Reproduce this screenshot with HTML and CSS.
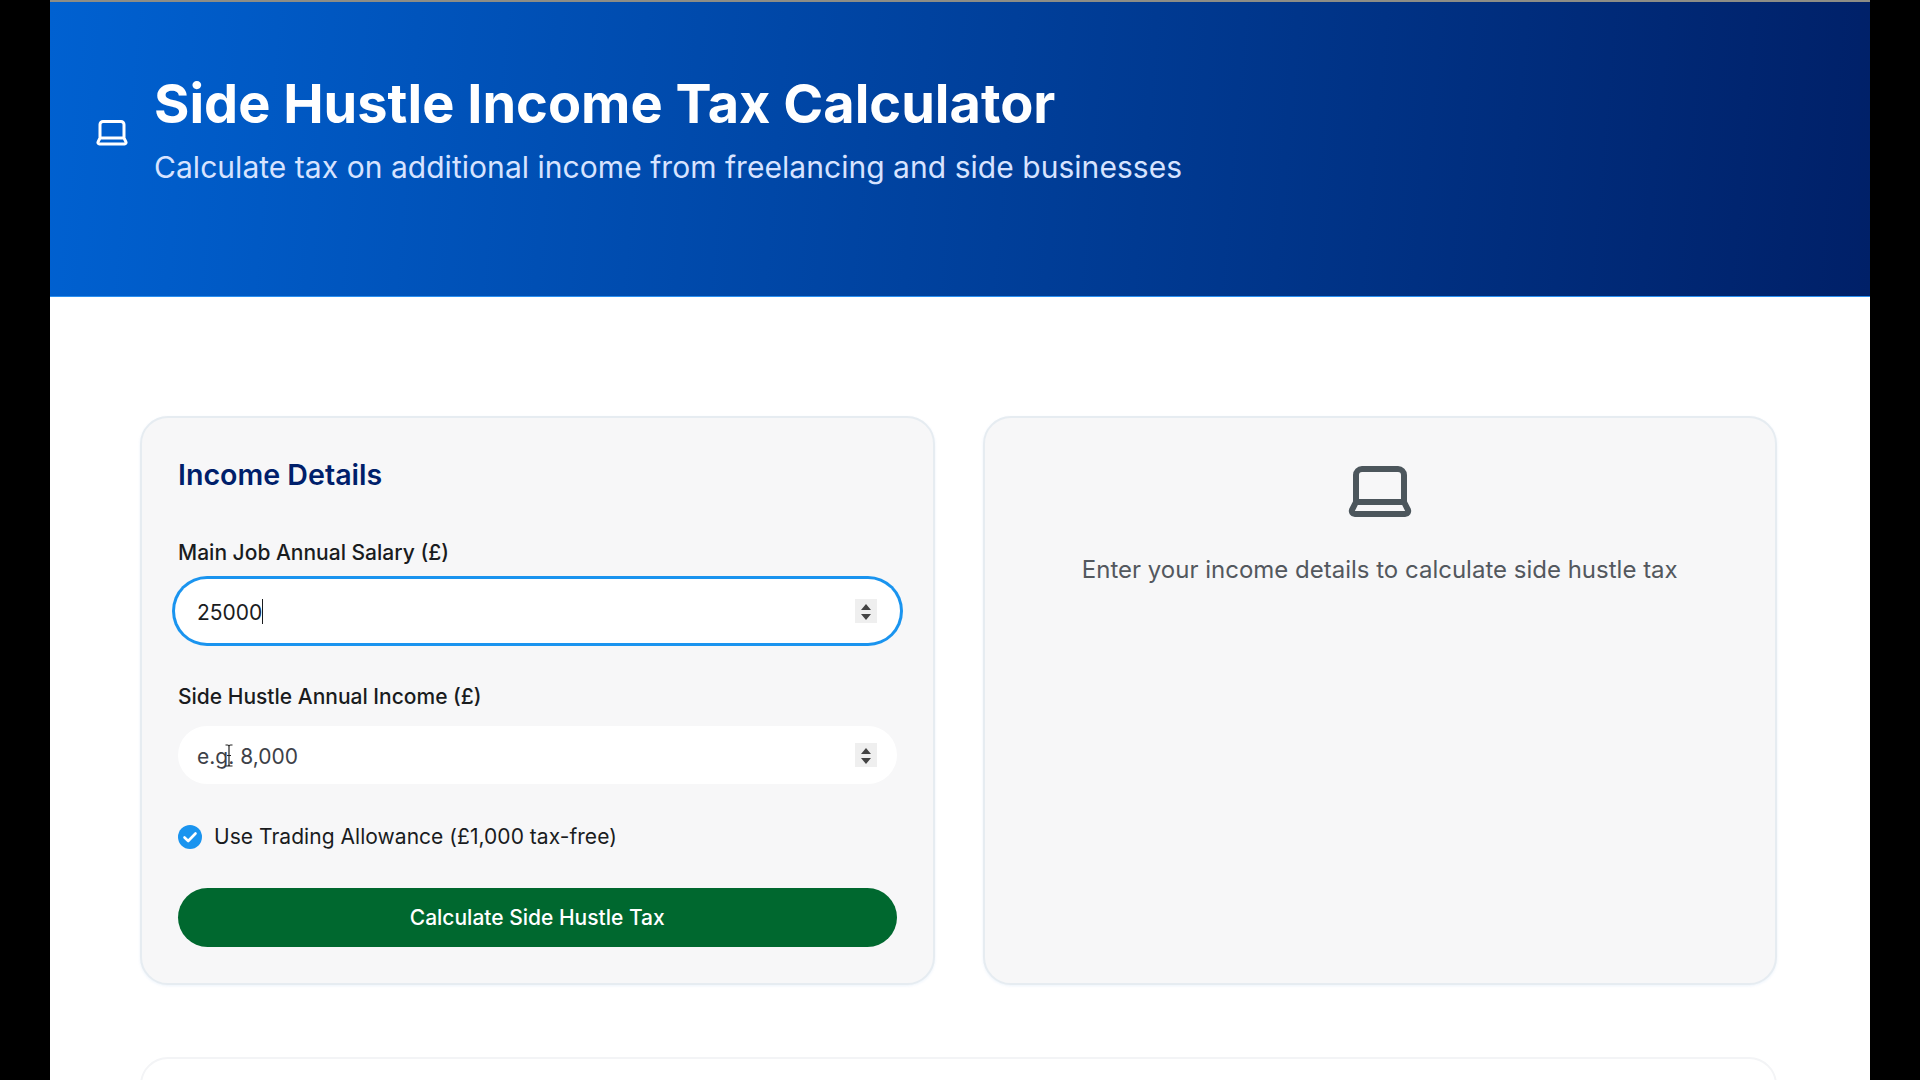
FILE: index.html
```html
<!DOCTYPE html>
<html lang="en">
<head>
<meta charset="utf-8">
<title>Side Hustle Income Tax Calculator</title>
<link rel="stylesheet" href="styles.css">
</head>
<body>
<div class="page">
  <header class="hero">
    <svg class="hero-icon" viewBox="0 0 24 24" fill="none" stroke="currentColor" stroke-width="2" stroke-linecap="round" stroke-linejoin="round"><path d="M20 16V7a2 2 0 0 0-2-2H6a2 2 0 0 0-2 2v9m16 0H4m16 0 1.28 2.55a1 1 0 0 1-.9 1.45H3.62a1 1 0 0 1-.9-1.45L4 16"/></svg>
    <div class="hero-text">
      <h1>Side Hustle Income Tax Calculator</h1>
      <p>Calculate tax on additional income from freelancing and side businesses</p>
    </div>
  </header>
  <main class="content">
    <div class="columns">
      <section class="card form-card">
        <h2>Income Details</h2>
        <div class="field">
          <label for="salary">Main Job Annual Salary (£)</label>
          <div class="input-wrap">
            <input id="salary" class="input focused" type="number" value="25000">
            <span class="caret"></span>
            <span class="spin"><svg viewBox="0 0 22 24"><path d="M11 5l5 6H6zM11 21l5-6H6z"/></svg></span>
          </div>
        </div>
        <div class="field">
          <label for="side">Side Hustle Annual Income (£)</label>
          <div class="input-wrap">
            <input id="side" class="input" type="number" placeholder="e.g. 8,000">
            <span class="spin"><svg viewBox="0 0 22 24"><path d="M11 5l5 6H6zM11 21l5-6H6z"/></svg></span>
            <svg class="ibeam" viewBox="0 0 10 23" fill="none" stroke="#222" stroke-width="1.2"><path d="M1.500 1h2Q5 1 5 2.500v18Q5 22 3.500 22h-2M8.500 1h-2Q5 1 5 2.500M5 20.500Q5 22 6.500 22h2M3 11.500h4"/></svg>
          </div>
        </div>
        <div class="check-row">
          <span class="check"><svg viewBox="0 0 24 24" fill="none" stroke="#fff" stroke-width="2.600" stroke-linecap="round" stroke-linejoin="round"><path d="M6.500 12.500l3.700 3.500 7.300-7.500"/></svg></span>
          <span>Use Trading Allowance (£1,000 tax-free)</span>
        </div>
        <button class="submit" type="button">Calculate Side Hustle Tax</button>
      </section>
      <section class="card empty-card">
        <svg class="empty-icon" viewBox="0 0 24 24" fill="none" stroke="currentColor" stroke-width="2" stroke-linecap="round" stroke-linejoin="round"><path d="M20 16V7a2 2 0 0 0-2-2H6a2 2 0 0 0-2 2v9m16 0H4m16 0 1.28 2.55a1 1 0 0 1-.9 1.45H3.620a1 1 0 0 1-.9-1.45L4 16"/></svg>
        <p>Enter your income details to calculate side hustle tax</p>
      </section>
    </div>
    <section class="card next-card"></section>
  </main>
</div>
</body>
</html>
```
FILE: styles.css
```css
* { box-sizing: border-box; }
html, body { margin: 0; height: 100%; overflow: hidden; background: #000; }
body { font-family: Inter, "Liberation Sans", sans-serif; color: #1a1c1e; }
.page { width: 1820px; height: 1080px; margin: 0 auto; background: #fff; overflow: hidden; border-top: 2px solid #8d8d86; }
.hero {
  height: 295px;
  padding: 71px 44px 0;
  display: flex;
  align-items: flex-start;
  gap: 24px;
  color: #fff;
  background: linear-gradient(95deg, #0061d1 0%, #002068 100%);
  border-bottom: 1px solid #2a8ff0;
}
.hero-icon { width: 36px; height: 36px; margin-top: 41px; flex: none; }
.hero h1 { margin: 0; font-size: 54.100px; line-height: 62px; font-weight: 700; }
.hero p { margin: 12px 0 0; font-size: 30px; line-height: 40px; font-weight: 400; letter-spacing: 0.04px; color: #d7e3ff; }
.content { padding: 119px 93px 0 90px; }
.columns { display: grid; grid-template-columns: 1fr 1fr; gap: 48px; }
.card {
  background: #f7f7f8;
  border: 2px solid #e6ecf1;
  border-radius: 28px;
  box-shadow: 0 1px 3px rgba(0, 97, 209, 0.08);
}
.form-card { height: 569px; padding: 36px; }
.form-card h2 { margin: 0 0 43px; font-size: 28.600px; line-height: 42px; font-weight: 600; color: #001f6b; }
.field { margin-bottom: 43px; }
.field label { display: block; margin-bottom: 15px; font-size: 21px; line-height: 28px; font-weight: 500; color: #1a1c1e; }
.input-wrap { position: relative; }
.input {
  display: block; width: 100%; height: 58px;
  padding: 2px 19px 0; border: 0; border-radius: 29px; outline: none;
  background: #fff; color: #1a1c1e;
  font-family: inherit; font-size: 21px;
}
.input::placeholder { color: #3d4148; opacity: 1; }
.input.focused { box-shadow: 0 0 0 3px #fff, 0 0 0 6px #1a94ef; }
.input::-webkit-inner-spin-button { appearance: none; }
.caret { position: absolute; left: 84px; top: 17px; width: 1px; height: 25px; background: #1a1c1e; }
.spin { position: absolute; right: 20px; top: 17px; width: 22px; height: 24px; background: #efefef; display: flex; }
.spin svg { width: 22px; height: 24px; fill: #444; }
.ibeam { position: absolute; left: 46px; top: 18px; width: 10px; height: 23px; }
.check-row { display: flex; align-items: center; gap: 12px; margin-top: -4px; font-size: 21px; line-height: 28px; letter-spacing: 0.04px; color: #1a1c1e; }
.check { width: 24px; height: 24px; border-radius: 50%; background: #1a94ef; display: flex; flex: none; }
.submit {
  display: block; width: 100%; height: 59px; margin-top: 37px;
  border: 0; border-radius: 30px; background: #00682f; color: #fff;
  font-family: inherit; font-size: 21px; font-weight: 500;
}
.empty-card { height: 569px; padding-top: 36px; text-align: center; color: #53585e; }
.empty-icon { width: 72px; height: 72px; display: block; margin: 0 auto; color: #4c565c; }
.empty-card p { margin: 28px 0 0; font-size: 24px; line-height: 32px; }
.next-card { height: 300px; margin-top: 72px; background: #fff; border-color: #f3f4f6; box-shadow: none; }
```
